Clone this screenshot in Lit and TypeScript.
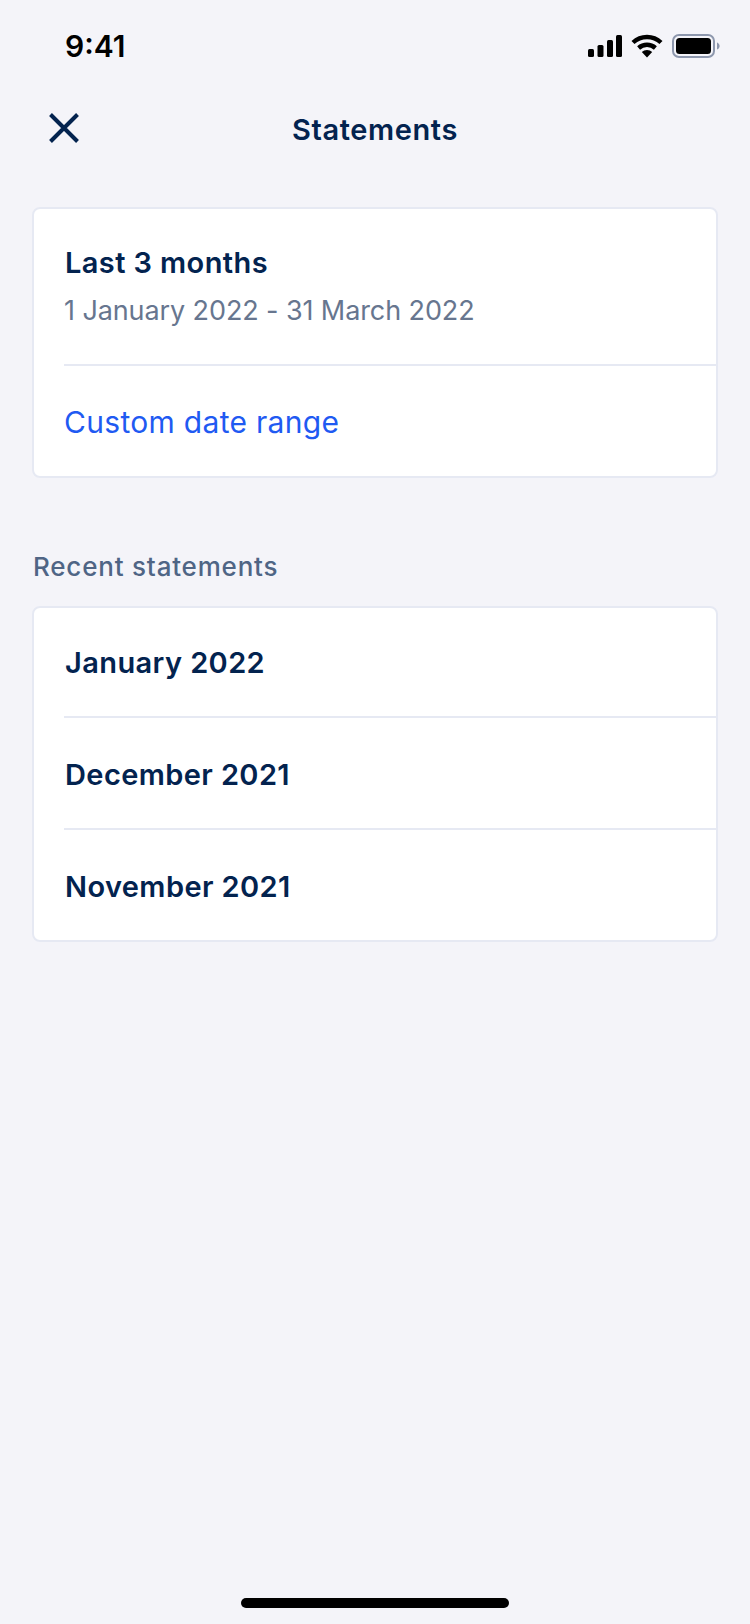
import { LitElement, html, css } from "lit";
import { customElement } from "lit/decorators.js";

const recent = ["January 2022", "December 2021", "November 2021"];

@customElement("app-root")
export class AppRoot extends LitElement {
  static styles = css`
    :host {
      display: block;
      font-family: "Inter", "Liberation Sans", sans-serif;
      color: #03234f;
    }
    .page {
      display: flex;
      flex-direction: column;
      height: 1624px;
      box-sizing: border-box;
      background: #f4f4f9;
    }
    .status {
      display: flex;
      justify-content: space-between;
      align-items: center;
      height: 91px;
      padding: 0 30px 0 65px;
      color: #000;
    }
    .time {
      font-size: 30px;
      font-weight: 600;
    }
    .status-icons {
      display: flex;
      align-items: center;
      gap: 9px;
    }
    .nav {
      display: grid;
      grid-template-columns: 1fr auto 1fr;
      align-items: center;
      height: 76px;
      padding: 0 32px;
    }
    .nav svg {
      display: block;
      margin: 0 0 2px 17px;
    }
    .title {
      font-size: 29px;
      font-weight: 600;
      letter-spacing: 0.6px;
    }
    .card {
      margin: 40px 32px 0;
      background: #fff;
      border: 2px solid #e6e9f3;
      border-radius: 8px;
    }
    .range {
      height: 157px;
      box-sizing: border-box;
      padding-top: 35px;
      margin-left: 30px;
      border-bottom: 2px solid #e6e9f3;
    }
    .range-title {
      padding-left: 1px;
      font-size: 29px;
      font-weight: 600;
      letter-spacing: 0.4px;
      line-height: 38px;
    }
    .range-dates {
      margin-top: 11px;
      font-size: 27px;
      letter-spacing: -0.1px;
      line-height: 36px;
      color: #67768f;
    }
    .custom {
      margin-left: 30px;
      height: 110px;
      box-sizing: border-box;
      padding-top: 3px;
      line-height: 107px;
      font-size: 30px;
      letter-spacing: 0.3px;
      color: #1f5af2;
    }
    .section {
      margin: 71px 32px 0;
      padding-left: 1px;
      font-size: 26px;
      font-weight: 500;
      letter-spacing: 0.8px;
      line-height: 36px;
      color: #4f6585;
    }
    .section + .card {
      margin-top: 21px;
    }
    .row {
      margin-left: 30px;
      height: 112px;
      box-sizing: border-box;
      padding: 4px 0 0 1px;
      line-height: 106px;
      font-size: 29px;
      font-weight: 600;
      letter-spacing: 0.4px;
      border-bottom: 2px solid #e6e9f3;
    }
    .row:first-child {
      height: 110px;
      padding-top: 1px;
      line-height: 107px;
    }
    .row:last-child {
      height: 110px;
      border-bottom: 0;
    }
    .home {
      width: 268px;
      height: 10px;
      border-radius: 5px;
      background: #000;
      margin: auto auto 16px;
    }
  `;

  render() {
    return html`
      <div class="page">
        <div class="status">
          <span class="time">9:41</span>
          <div class="status-icons">
            <svg width="34" height="22" viewBox="0 0 34 22" fill="#000">
              <rect x="0" y="14" width="6" height="8" rx="1.5" />
              <rect x="9.5" y="10" width="6" height="12" rx="1.5" />
              <rect x="19" y="5" width="6" height="17" rx="1.5" />
              <rect x="28" y="0" width="6" height="22" rx="1.5" />
            </svg>
            <svg width="32" height="24" viewBox="0 0 32 24" fill="none" stroke="#000" stroke-width="4.4">
              <path d="M2 8.5a20.5 20.5 0 0 1 28 0" />
              <path d="M7.6 14a12.6 12.6 0 0 1 16.8 0" />
              <path d="M16 23.5l-5.2-5.4a7.6 7.6 0 0 1 10.4 0z" fill="#000" stroke="none" />
            </svg>
            <svg width="48" height="24" viewBox="0 0 48 24">
              <rect x="1" y="1" width="41" height="22" rx="6" fill="none" stroke="#8d97ad" stroke-width="2" />
              <rect x="4" y="4" width="35" height="16" rx="3.5" fill="#000" />
              <path d="M45 8.5c1.6.5 2.6 2 2.6 3.5s-1 3-2.6 3.5z" fill="#8d97ad" />
            </svg>
          </div>
        </div>
        <div class="nav">
          <svg width="30" height="30" viewBox="0 0 30 30" fill="none" stroke="#03234f" stroke-width="4">
            <path d="M1.5 1.5l27 27M28.5 1.5l-27 27" />
          </svg>
          <span class="title">Statements</span>
          <span></span>
        </div>
        <div class="card">
          <div class="range">
            <div class="range-title">Last 3 months</div>
            <div class="range-dates">1 January 2022 - 31 March 2022</div>
          </div>
          <div class="custom">Custom date range</div>
        </div>
        <div class="section">Recent statements</div>
        <div class="card">
          ${recent.map((r) => html`<div class="row">${r}</div>`)}
        </div>
        <div class="home"></div>
      </div>
    `;
  }
}
